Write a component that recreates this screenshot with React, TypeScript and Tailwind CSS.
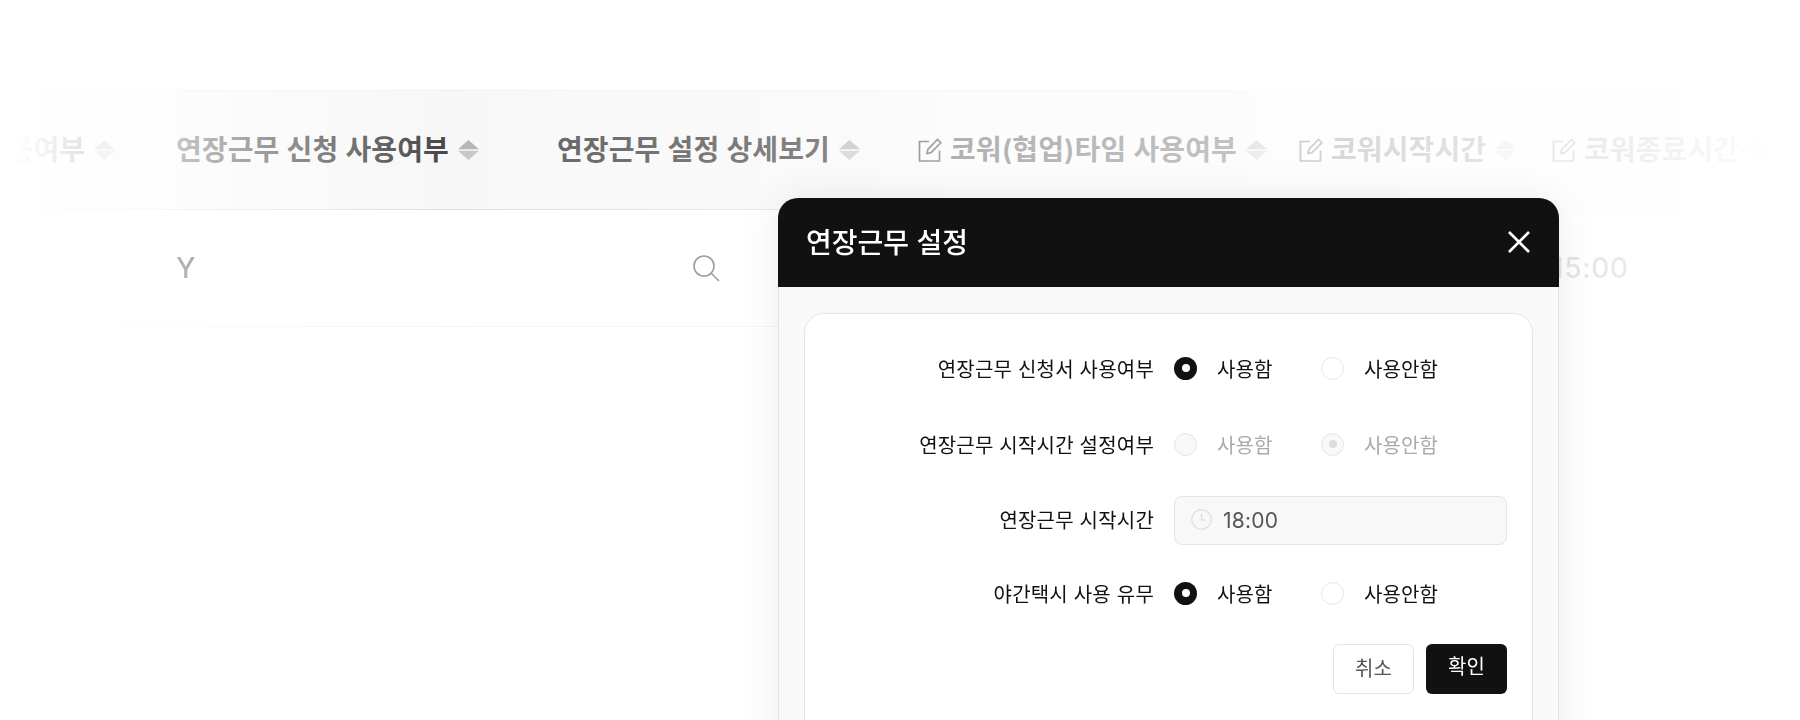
const font = "font-['Inter','Noto_Sans_CJK_KR',sans-serif]";

function SortIcon() {
  return (
    <svg width="21" height="20" viewBox="0 0 21 20" className="shrink-0">
      <path d="M10.5 0 L21 9.2 H0 Z" fill="#b4b4b4" />
      <path d="M0 10.8 H21 L10.5 20 Z" fill="#c6c6c6" />
    </svg>
  );
}

function EditIcon() {
  return (
    <svg width="24" height="24" viewBox="0 0 24 24" fill="none" stroke="#333" strokeWidth="1.7" className="shrink-0">
      <path d="M11 3.5 H1.5 V23 H21.5 V12.5" />
      <path d="M9 15.5 L9.8 11.5 L19.5 1.5 L22.8 4.8 L13 14.7 Z" />
    </svg>
  );
}

function HeadCell({ label, width, edit }: { label: string; width: string; edit?: boolean }) {
  return (
    <div className={`flex shrink-0 items-center ${width}`}>
      {edit && (
        <span className="mr-[8px]">
          <EditIcon />
        </span>
      )}
      <span className="mr-[9px] whitespace-nowrap pb-px tracking-[0.1px]">{label}</span>
      <SortIcon />
    </div>
  );
}

function Radio({ checked, disabled, label }: { checked?: boolean; disabled?: boolean; label: string }) {
  let circle = "border border-[#e5e5e5] bg-white";
  if (checked) circle = "bg-[#111111]";
  if (disabled) circle = "border border-[#e5e5e5] bg-[#f8f8f8]";
  return (
    <div className="flex w-[147px] items-center">
      <span className={`flex h-[23px] w-[23px] items-center justify-center rounded-full ${circle}`}>
        {checked && <span className={`h-[8px] w-[8px] rounded-full ${disabled ? "bg-[#dddddd]" : "bg-white"}`} />}
      </span>
      <span className={`ml-[20px] pt-[4px] text-[20px] tracking-[0.1px] ${disabled ? "text-[#aaaaaa]" : "text-[#111111]"}`}>{label}</span>
    </div>
  );
}

function Row({ label, className, shift, children }: { label: string; className: string; shift?: boolean; children: React.ReactNode }) {
  return (
    <div className={`flex items-center ${className}`}>
      <div className={`w-[349px] text-right text-[20px] tracking-[0.2px] text-[#111111] ${shift ? "pt-[4px]" : ""}`}>{label}</div>
      <div className="ml-[20px] flex flex-1 items-center">{children}</div>
    </div>
  );
}

export default function App() {
  return (
    <div className={`relative h-[720px] w-[1800px] overflow-hidden bg-white ${font}`}>
      {/* 뒤쪽 테이블 */}
      <div className="pt-[90px] [mask-image:linear-gradient(to_right,transparent_15px,rgba(0,0,0,0.12)_70px,rgba(0,0,0,0.3)_175px,rgba(0,0,0,1)_450px,rgba(0,0,0,0.8)_560px,rgba(0,0,0,0.65)_830px,rgba(0,0,0,0.42)_950px,rgba(0,0,0,0.32)_1240px,rgba(0,0,0,0.22)_1330px,rgba(0,0,0,0.15)_1480px,rgba(0,0,0,0.1)_1600px,transparent_1800px)]">
        <div className="flex h-[120px] items-center overflow-hidden border-y border-t-[#eeeeee] border-b-[#dddddd] bg-[#f7f7f7] text-[28px] font-semibold text-[#444444]">
          <div className="flex w-[176px] shrink-0 items-center justify-end pr-[61px]">
            <span className="mr-[9px] whitespace-nowrap pb-px">용여부</span>
            <SortIcon />
          </div>
          <HeadCell label="연장근무 신청 사용여부" width="w-[381px]" />
          <HeadCell label="연장근무 설정 상세보기" width="w-[361px]" />
          <HeadCell label="코워(협업)타임 사용여부" width="w-[381px]" edit />
          <HeadCell label="코워시작시간" width="w-[253px]" edit />
          <HeadCell label="코워종료시간" width="w-[248px]" edit />
        </div>
        <div className="flex h-[117px] items-center border-b border-b-[#f3f3f3] text-[28px] font-medium tracking-[0.6px] text-[#111111]">
          <div className="w-[176px] shrink-0" />
          <div className="w-[381px] shrink-0">Y</div>
          <div className="flex w-[361px] shrink-0 justify-end pr-[198px]">
            <svg width="27" height="27" viewBox="0 0 27 27" fill="none" stroke="#777" strokeWidth="1.6">
              <circle cx="11" cy="11" r="10" />
              <path d="M18 18 L26 26" />
            </svg>
          </div>
          <div className="w-[381px] shrink-0" />
          <div className="w-[253px] shrink-0" />
          <div>15:00</div>
        </div>
      </div>

      {/* 연장근무 설정 모달 */}
      <div className="absolute left-[778px] top-[198px] w-[781px] rounded-t-[20px] border-x border-x-[#e5e5e5] bg-[#f9f9f9] pb-[40px] shadow-[0_0_40px_rgba(0,0,0,0.08)]">
        <div className="-mx-px flex h-[89px] items-center justify-between rounded-t-[20px] bg-[#111111] pl-[28px] pr-[29px]">
          <div className="text-[28px] font-medium text-white">연장근무 설정</div>
          <svg width="22" height="22" viewBox="0 0 22 22" fill="none" stroke="#fff" strokeWidth="2.6" className="-mt-[2px]">
            <path d="M1 1 L21 21 M21 1 L1 21" />
          </svg>
        </div>
        <div className="mx-[25px] mt-[26px] h-[500px] rounded-[20px] border border-[#e5e5e5] bg-white pt-[31px]">
          <Row label="연장근무 신청서 사용여부" className="h-[46px]" shift>
            <Radio checked label="사용함" />
            <Radio label="사용안함" />
          </Row>
          <Row label="연장근무 시작시간 설정여부" className="mt-[30px] h-[46px]" shift>
            <Radio disabled label="사용함" />
            <Radio disabled checked label="사용안함" />
          </Row>
          <Row label="연장근무 시작시간" className="mt-[29px] h-[49px]">
            <div className="flex h-[49px] w-[333px] items-center rounded-[8px] border border-[#e5e5e5] bg-[#f8f8f8] pl-[16px]">
              <svg width="21" height="21" viewBox="0 0 21 21" fill="none" stroke="#dddddd" strokeWidth="1.2" className="-mt-[3px]">
                <circle cx="10.5" cy="10.5" r="9.8" />
                <path d="M10.5 5 V11 H15" />
              </svg>
              <span className="ml-[11px] text-[21px] tracking-[0.2px] text-[#555555]">18:00</span>
            </div>
          </Row>
          <Row label="야간택시 사용 유무" className="mt-[25px] h-[46px]" shift>
            <Radio checked label="사용함" />
            <Radio label="사용안함" />
          </Row>
          <div className="mr-[25px] mt-[28px] flex justify-end gap-[12px]">
            <button className="h-[50px] w-[81px] rounded-[6px] border border-[#e5e5e5] bg-white text-[20px] text-[#555555]">취소</button>
            <button className="h-[50px] w-[81px] rounded-[6px] bg-[#111111] pb-[4px] text-[20px] text-white">확인</button>
          </div>
        </div>
      </div>
    </div>
  );
}
